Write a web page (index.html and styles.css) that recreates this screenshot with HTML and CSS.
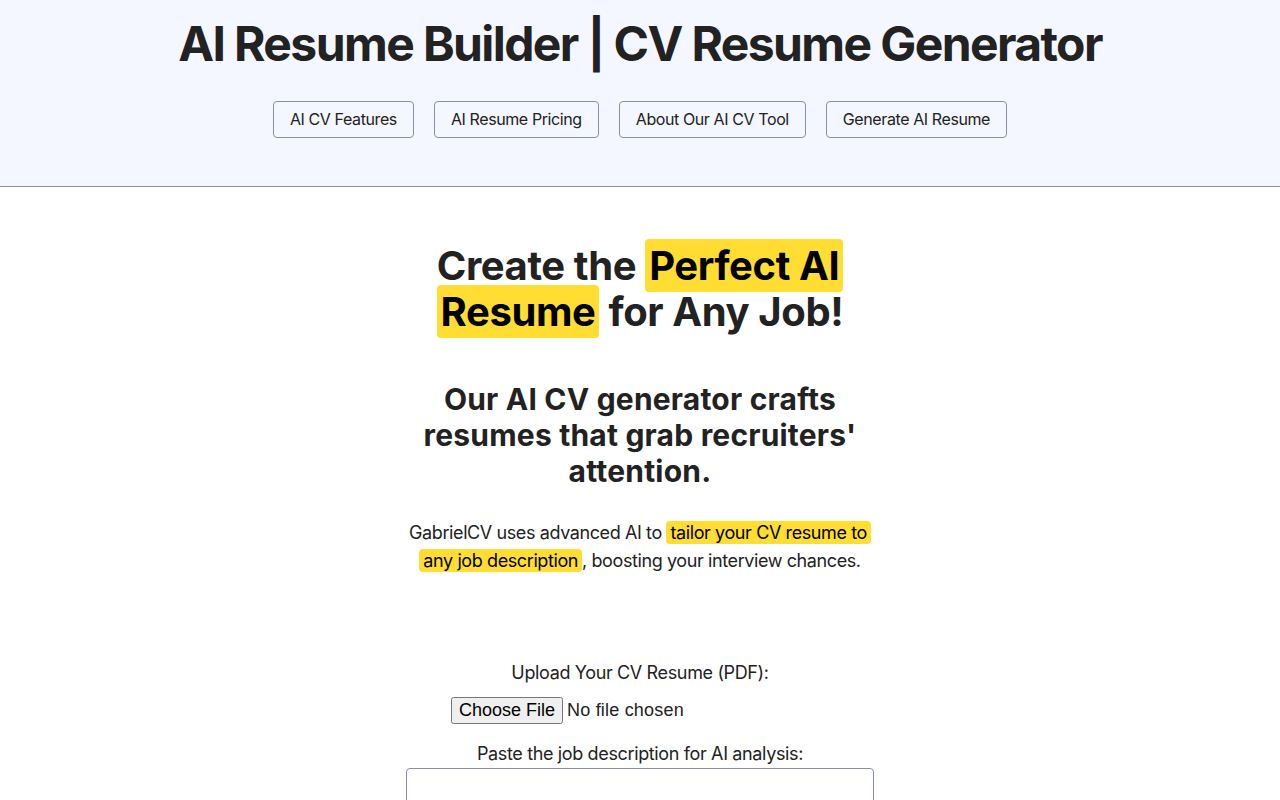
FILE: index.html
```html
<!DOCTYPE html>
<html lang="en">
<head>
<meta charset="utf-8">
<title>AI Resume Builder | CV Resume Generator</title>
<link rel="stylesheet" href="styles.css">
</head>
<body>
<header class="site-header">
  <h1 class="site-title">AI Resume Builder | CV Resume Generator</h1>
  <nav class="nav">
    <a class="nav-btn" href="#features">AI CV Features</a>
    <a class="nav-btn" href="#pricing">AI Resume Pricing</a>
    <a class="nav-btn" href="#about">About Our AI CV Tool</a>
    <a class="nav-btn" href="#generate">Generate AI Resume</a>
  </nav>
</header>
<main class="main">
  <section class="hero">
    <h2 class="hero-title">Create the <span class="hl">Perfect AI Resume</span> for Any Job!</h2>
    <h3 class="hero-sub">Our AI CV generator crafts resumes that grab recruiters' attention.</h3>
    <p class="hero-text">GabrielCV uses advanced AI to <span class="hl-sm">tailor your CV resume to any job description</span>, boosting your interview chances.</p>
  </section>
  <form class="form" id="generate">
    <label class="form-label" for="cv">Upload Your CV Resume (PDF):</label>
    <input class="file" type="file" id="cv" accept="application/pdf">
    <label class="form-label label-2" for="jd">Paste the job description for AI analysis:</label>
    <textarea class="textarea" id="jd" rows="6"></textarea>
  </form>
</main>
</body>
</html>
```

FILE: styles.css
```css
* { box-sizing: border-box; }
html, body { margin: 0; padding: 0; }
body {
  font-family: Inter, "Noto Sans", "Liberation Sans", sans-serif;
  color: #222;
  background: #fff;
}
.site-header {
  background: #f4f7ff;
  border-bottom: 1px solid #8a8fa8;
  padding: 15px 0 48px;
  text-align: center;
}
.site-title {
  margin: 0;
  font-size: 48px;
  line-height: 58px;
  font-weight: 700;
  letter-spacing: -1.6px;
}
.nav {
  margin-top: 28px;
  display: flex;
  justify-content: center;
  gap: 20px;
}
.nav-btn {
  display: inline-block;
  padding: 0 16px;
  height: 37px;
  line-height: 35px;
  border: 1px solid #8a8fa8;
  border-radius: 4px;
  font-size: 16px;
  letter-spacing: -0.4px;
  color: #222;
  text-decoration: none;
  background: transparent;
}
.main {
  width: 468px;
  margin: 0 auto;
  padding-top: 56px;
  text-align: center;
}
.hero-title {
  margin: 0;
  font-size: 40px;
  line-height: 46px;
  font-weight: 700;
  letter-spacing: -0.4px;
}
.hl {
  background: #ffdd33;
  color: #000;
  padding: 2px 4px;
  border-radius: 4px;
  -webkit-box-decoration-break: clone;
  box-decoration-break: clone;
}
.hero-sub {
  margin: 46px 0 0;
  font-size: 30px;
  line-height: 36px;
  font-weight: 700;
  letter-spacing: 0.2px;
}
.hero-text {
  margin: 30px 0 0;
  font-size: 18px;
  line-height: 28px;
  letter-spacing: -0.4px;
}
.hl-sm {
  background: #ffdd33;
  color: #000;
  padding: 1px 4px;
  border-radius: 4px;
  -webkit-box-decoration-break: clone;
  box-decoration-break: clone;
}
.form {
  margin-top: 84px;
  display: flex;
  flex-direction: column;
  align-items: center;
}
.form-label {
  font-size: 18px;
  line-height: 28px;
  letter-spacing: -0.36px;
}
.file {
  display: block;
  width: 378px;
  margin-top: 10px;
  font-family: "Liberation Sans", Arial, sans-serif;
  font-size: 18px;
  letter-spacing: 0.2px;
  color: #222;
}
.label-2 {
  margin-top: 16px;
}
.textarea {
  display: block;
  width: 468px;
  height: 120px;
  border: 1px solid #8a8fa8;
  border-radius: 4px;
  resize: vertical;
  font-family: inherit;
  font-size: 16px;
}
```
